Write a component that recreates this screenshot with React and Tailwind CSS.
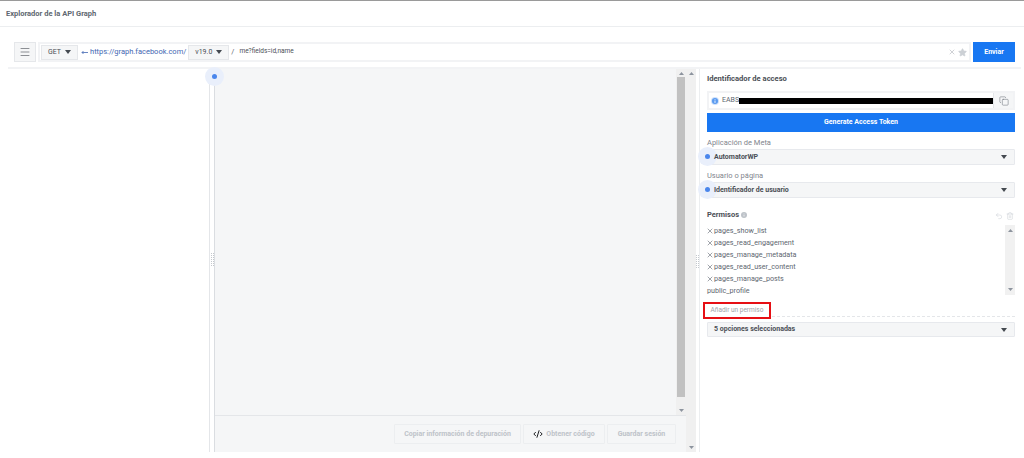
import { CodeXml, Copy, Trash2, Undo2, X, Star, Menu } from 'lucide-react';

const Caret = ({ className = '' }) => (
  <svg width="6" height="4" viewBox="0 0 6 4" className={`shrink-0 ${className}`}>
    <path d="M0 0h6L3 4z" fill="#444950" />
  </svg>
);

const Pulse = ({ className = '' }) => (
  <span className={`absolute flex h-[19px] w-[19px] items-center justify-center rounded-full bg-[#e9effb] ${className}`}>
    <span className="h-[5px] w-[5px] rounded-full bg-[#4a86ec]" />
  </span>
);

const ScrollArrow = ({ up }) => (
  <svg width="5" height="3" viewBox="0 0 5 3">
    <path d={up ? 'M0 3h5L2.5 0z' : 'M0 0h5L2.5 3z'} fill="#8d949e" />
  </svg>
);

const InfoDot = ({ size, ring, fill }) => (
  <svg width={size} height={size} viewBox="0 0 10 10" className="shrink-0">
    <circle cx="5" cy="5" r="5" fill={ring} />
    <circle cx="5" cy="5" r="3.8" fill={fill} />
    <path d="M5 4.4v3M5 2.6v.9" stroke="#ffffff" strokeWidth="1.1" />
  </svg>
);

const Grip = ({ className = '' }) => (
  <span className={`absolute h-[13px] w-[3px] border-x border-dotted border-[#c4c8cd] ${className}`} />
);

const permissions = [
  'pages_show_list',
  'pages_read_engagement',
  'pages_manage_metadata',
  'pages_read_user_content',
  'pages_manage_posts',
];

const Select = ({ label, value }) => (
  <div>
    <div className="h-[13px] text-[7.5px] leading-[13px] text-[#7f858d]">{label}</div>
    <div className="relative flex h-[16px] items-center justify-between rounded-[1px] border border-[#e7e9ed] bg-[#f5f6f7] pl-[6px] pr-[7px]">
      <Pulse className="left-[-10px] top-[-3px]" />
      <span className="relative text-[7px] font-bold text-[#4b4f56]">{value}</span>
      <Caret />
    </div>
  </div>
);

export default function App() {
  return (
    <div className="h-[458px] w-[1024px] overflow-hidden bg-white font-['Roboto','Liberation_Sans',sans-serif] text-[#4b4f56]">
      <header className="flex h-[27px] items-center border-t border-b border-t-[#9a9a9a] border-b-[#eceef0] pl-[6px]">
        <span className="text-[7.5px] font-bold text-[#606770]">Explorador de la API Graph</span>
      </header>

      <div className="flex h-[40px] items-start pl-[14px] pr-[9px] pt-[15px]">
        <button className="flex h-[20px] w-[22px] items-center justify-center border border-[#e5e7ea] bg-[#f5f6f7]">
          <Menu size={12} strokeWidth={1.2} color="#444950" />
        </button>
        <div className="ml-[2px] flex h-[20px] flex-1 items-center border-2 border-[#f2f3f5] pl-[1px] pr-[1px]">
          <div className="flex h-[15px] w-[37px] items-center justify-center gap-[4px] border border-[#e5e7ea] bg-[#f5f6f7] text-[7px] text-[#4b4f56]">
            GET <Caret />
          </div>
          <svg width="7" height="5" viewBox="0 0 7 5" className="ml-[3px] shrink-0">
            <path d="M7 2.5H1M2.5 1 1 2.5 2.5 4" fill="none" stroke="#4267b2" strokeWidth="0.8" />
          </svg>
          <span className="ml-[2px] text-[7.5px] text-[#4267b2]">https://graph.facebook.com/</span>
          <div className="ml-[2px] flex h-[15px] w-[41px] items-center justify-center gap-[4px] border border-[#e5e7ea] bg-[#f5f6f7] text-[7px] text-[#4b4f56]">
            v19.0 <Caret />
          </div>
          <span className="ml-[2px] text-[7.5px] text-[#606770]">/</span>
          <span className="ml-[5px] text-[6.5px] text-[#4b4f56]">me?fields=id,name</span>
          <div className="ml-auto flex items-center gap-[2px] pr-[1px]">
            <X size={8} strokeWidth={2} color="#b6bac0" />
            <Star size={9} fill="#ccd0d5" color="#ccd0d5" />
          </div>
        </div>
        <button className="ml-[2px] flex h-[20px] w-[42px] items-center justify-center bg-[#1877f2] text-[7px] font-bold text-white">
          Enviar
        </button>
      </div>

      <div className="ml-[8px] mr-[3px] h-[2px] bg-[#f2f3f5]" />

      <div className="flex h-[383px]">
        <aside className="w-[209px] shrink-0" />
        <div className="w-[1px] shrink-0 bg-[#e4e6e9]" />
        <div className="relative flex w-[4px] shrink-0">
          <Pulse className="left-[-5px] top-[-2px] z-10" />
          <Grip className="left-[1px] top-[184px]" />
        </div>
        <div className="w-[1px] shrink-0 bg-[#dadde1]" />

        <main className="flex w-[471px] shrink-0 flex-col bg-[#f5f6f7]">
          <div className="flex h-[347px] border-b border-[#e4e6e9]">
            <div className="flex-1" />
            <div className="flex w-[10px] flex-col items-center bg-[#f0f0f0]">
              <div className="flex h-[8px] items-center"><ScrollArrow up /></div>
              <div className="h-[320px] w-[8px] bg-[#c1c1c1]" />
              <div className="mt-auto flex h-[10px] items-center"><ScrollArrow /></div>
            </div>
          </div>
          <div className="flex flex-1 items-start justify-end gap-[2px] pr-[10px] pt-[8px] text-[7px] font-bold text-[#bec3c9]">
            <button className="h-[20px] w-[127px] rounded-[1px] border border-[#eceef0]">Copiar información de depuración</button>
            <button className="flex h-[20px] w-[82px] items-center justify-center gap-[3px] rounded-[1px] border border-[#eceef0]">
              <CodeXml size={10} strokeWidth={2.4} color="#1c1e21" />
              Obtener código
            </button>
            <button className="h-[20px] w-[69px] rounded-[1px] border border-[#eceef0]">Guardar sesión</button>
          </div>
        </main>

        <div className="flex w-[10px] shrink-0 flex-col items-center bg-[#f0f0f0]">
          <div className="flex h-[8px] items-center"><ScrollArrow up /></div>
          <div className="mt-auto flex h-[10px] items-center"><ScrollArrow /></div>
        </div>
        <div className="relative w-[3px] shrink-0">
          <Grip className="left-[0px] top-[186px]" />
        </div>
        <div className="w-[1px] shrink-0 bg-[#eceef0]" />

        <section className="w-[316px] shrink-0 pl-[7px] pr-[1px] pt-[4px]">
          <h2 className="text-[7.6px] font-bold leading-[12px] text-[#4b4f56]">Identificador de acceso</h2>

          <div className="mt-[6px] flex h-[19px] items-center border-2 border-[#f2f3f5]">
            <span className="ml-[2px]"><InfoDot size={8} ring="#cfe2fb" fill="#5b9bf0" /></span>
            <span className="ml-[3px] w-[17px] text-[7px] text-[#606770]">EABS</span>
            <div className="h-[6px] flex-1 bg-black" />
            <div className="flex h-full w-[20px] items-center justify-center border-l border-[#e4e6e9] bg-[#f5f6f7]">
              <Copy size={10} strokeWidth={1.2} color="#606770" />
            </div>
          </div>

          <button className="mt-[3px] block h-[19px] w-full bg-[#1877f2] text-[7px] font-bold text-white">
            Generate Access Token
          </button>

          <div className="mt-[4px]">
            <Select label="Aplicación de Meta" value="AutomatorWP" />
          </div>
          <div className="mt-[4px]">
            <Select label="Usuario o página" value="Identificador de usuario" />
          </div>

          <div className="mt-[11px] flex h-[12px] items-start justify-between pr-[1px]">
            <div className="flex items-center gap-[2px]">
              <span className="text-[7.5px] font-bold leading-[12px] text-[#4b4f56]">Permisos</span>
              <InfoDot size={6} ring="#bec3c9" fill="#bec3c9" />
            </div>
            <div className="mt-[3px] flex gap-[3px]">
              <Undo2 size={8} strokeWidth={1.2} color="#bec3c9" />
              <Trash2 size={8} strokeWidth={1.2} color="#bec3c9" />
            </div>
          </div>

          <div className="mt-[4px] flex h-[70px]">
            <ul className="flex-1 text-[7.2px] leading-[12px] text-[#606770]">
              {permissions.map(permission => (
                <li key={permission} className="flex items-center gap-[0px]">
                  <X size={8} strokeWidth={1.8} color="#606770" className="ml-[-1px]" />
                  {permission}
                </li>
              ))}
              <li>public_profile</li>
            </ul>
            <div className="flex w-[10px] flex-col items-center justify-between bg-[#f1f1f1] py-[4px]">
              <ScrollArrow up />
              <ScrollArrow />
            </div>
          </div>

          <div className="h-[22px] border-b border-dashed border-[#e4e6e9]">
            <div className="relative left-[-4px] top-[7px] flex h-[17px] w-[68px] items-center justify-center border-2 border-[#e60f14] bg-white text-[6.5px] text-[#a0a4aa]">
              Añadir un permiso
            </div>
          </div>

          <div className="mt-[5px] flex h-[15px] items-center justify-between rounded-[1px] border border-[#e7e9ed] bg-[#f5f6f7] pl-[6px] pr-[7px]">
            <span className="text-[7px] font-bold text-[#4b4f56]">5 opciones seleccionadas</span>
            <Caret />
          </div>
        </section>
      </div>
    </div>
  );
}
